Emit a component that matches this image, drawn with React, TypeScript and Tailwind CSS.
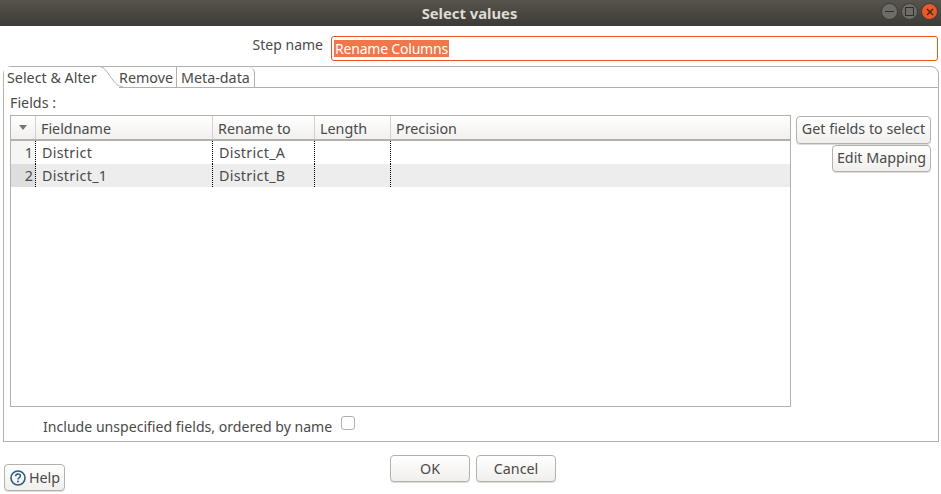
import React from "react";

const font = "font-['Noto_Sans','Open_Sans',sans-serif]";

const Btn = ({ label, className }: { label: string; className: string }) => (
  <button className={`flex items-center justify-center rounded-[4px] border border-[#b4b1ac] bg-gradient-to-b from-white to-[#f0efed] text-[14.3px] text-[#4a4a48] shadow-[0_1px_0_#dedcd8] ${className}`}>
    {label}
  </button>
);

const rows = [
  { n: 1, name: "District", to: "District_A" },
  { n: 2, name: "District_1", to: "District_B" },
];

const TitleButton = ({ bg, children }: { bg: string; children: React.ReactNode }) => (
  <div className={`flex h-[17px] w-[17px] items-center justify-center rounded-full border border-[#3c3a36] ${bg}`}>{children}</div>
);

export default function App() {
  return (
    <div className={`flex h-[494px] w-[941px] flex-col overflow-hidden bg-white text-[14.3px] text-[#4a4a48] ${font}`}>
      {/* title bar */}
      <div className="relative flex h-[26px] items-center justify-center bg-gradient-to-b from-[#57544d] to-[#3d3b36]">
        <span className="-ml-[2px] text-[14.8px] font-bold text-[#dfdbd2]">Select values</span>
        <div className="absolute right-[3px] top-[3px] flex gap-[3px]">
          <TitleButton bg="bg-[#6e6c66]">
            <div className="h-[1px] w-[9px] bg-[#2f2e2a]" />
          </TitleButton>
          <TitleButton bg="bg-[#6e6c66]">
            <div className="h-[9px] w-[9px] border border-[#2f2e2a]" />
          </TitleButton>
          <TitleButton bg="bg-[#e9592a]">
            <svg width="8" height="8" viewBox="0 0 8 8">
              <path d="M1 1L7 7M7 1L1 7" stroke="#4a2412" strokeWidth="1.4" />
            </svg>
          </TitleButton>
        </div>
      </div>

      {/* step name */}
      <div className="mt-[10px] flex h-[25px]">
        <div className="w-[323px] pb-[2px] text-right text-[14px] leading-[18px]">Step name</div>
        <div className="ml-[8px] mr-[3px] flex flex-1 items-center rounded-[3px] border border-[#e95420] pl-[2px]">
          <span className="bg-[#f0774a] px-[1px] text-[14px] leading-[17px] tracking-[-0.2px] text-white">Rename Columns</span>
        </div>
      </div>

      {/* tabs */}
      <div className="relative ml-[3px] mr-[2px] mt-[5px] flex h-[22px] rounded-t-[8px] border border-[#b4b1ac]">
        <div className="relative z-10 -mb-[1px] w-[115px] bg-white pl-[3px] leading-[21px]">Select &amp; Alter</div>
        <svg className="absolute left-[92px] top-[-1px] z-20" width="30" height="22" viewBox="0 0 30 22" fill="none">
          <path d="M0 .5H3C9 .5 12 8 17 13C20 18 23 21 28 21" fill="white" />
          <path d="M0 .5H3C9 .5 12 8 17 14C20 18 22 20.5 27 20.5" stroke="#b4b1ac" />
        </svg>
        <div className="w-[57px] leading-[21px]">Remove</div>
        <div className="w-[79px] rounded-tr-[6px] border-x border-[#b4b1ac] pl-[4px] leading-[21px]">Meta-data</div>
      </div>

      {/* panel */}
      <div className="ml-[3px] mr-[2px] flex h-[354px] flex-col border border-t-0 border-[#b4b1ac] px-[6px]">
        <div className="mt-[6px] h-[18px] leading-[18px]">Fields :</div>
        <div className="mt-[3px] flex">
          {/* table */}
          <div className="flex h-[292px] w-[781px] flex-col border border-[#b4b1ac]">
            <div className="flex h-[25px] border-b-2 border-[#b4b1ac] bg-gradient-to-b from-white to-[#f1f0ee]">
              <div className="flex w-[25px] items-center justify-center border-r border-[#d4d2ce]">
                <svg width="8" height="5" viewBox="0 0 8 5" className="mr-[1px]">
                  <path d="M0 0H8L4 5Z" fill="#77756f" />
                </svg>
              </div>
              <div className="w-[177px] border-r border-[#d4d2ce] pl-[5px] leading-[25px]">Fieldname</div>
              <div className="w-[102px] border-r border-[#d4d2ce] pl-[5px] leading-[25px]">Rename to</div>
              <div className="w-[76px] border-r border-[#d4d2ce] pl-[5px] leading-[25px]">Length</div>
              <div className="flex-1 pl-[5px] leading-[25px]">Precision</div>
            </div>
            {rows.map((r) => (
              <div key={r.n} className={`flex h-[23px] leading-[23px] ${r.n === 2 ? "bg-[#ededed]" : "bg-white"}`}>
                <div className={`w-[25px] border-r border-dotted border-black pr-[2px] text-right ${r.n === 2 ? "bg-[#dedede]" : "bg-[#f5f5f4]"}`}>{r.n}</div>
                <div className="w-[177px] border-r border-dotted border-black pl-[6px] tracking-[0.3px]">{r.name}</div>
                <div className="w-[102px] border-r border-dotted border-black pl-[6px] tracking-[0.3px]">{r.to}</div>
                <div className="w-[76px] border-r border-dotted border-black" />
                <div className="flex-1" />
              </div>
            ))}
          </div>
          {/* side buttons */}
          <div className="ml-[5px] flex w-[135px] flex-col items-end gap-[1px] pt-[1px]">
            <Btn label="Get fields to select" className="h-[28px] w-[135px] pb-[2px]" />
            <Btn label="Edit Mapping" className="h-[27px] w-[99px] pb-[2px]" />
          </div>
        </div>
        <div className="mt-[9px] flex items-start pl-[33px]">
          <span className="pt-[1px] text-[14.1px] leading-[20px]">Include unspecified fields, ordered by name</span>
          <div className="ml-[9px] h-[14px] w-[14px] rounded-[3px] border border-[#b4b1ac] bg-white" />
        </div>
      </div>

      {/* footer */}
      <div className="flex flex-1">
        <button className="ml-[4px] mt-[22px] flex h-[27px] w-[61px] items-center justify-center gap-[2px] rounded-[4px] border border-[#b4b1ac] bg-gradient-to-b from-white to-[#f0efed] shadow-[0_1px_0_#dedcd8]">
          <svg width="18" height="18" viewBox="0 0 18 18" fill="none">
            <circle cx="9" cy="9" r="7" stroke="#2b5c7e" strokeWidth="1.6" />
            <path d="M6.6 7.2C6.7 5.8 7.7 5 9 5C10.4 5 11.4 5.9 11.4 7C11.4 8.5 9 8.6 9 10.4" stroke="#2b5c7e" strokeWidth="1.5" />
            <circle cx="9" cy="12.6" r="1" fill="#2b5c7e" />
          </svg>
          Help
        </button>
        <Btn label="OK" className="ml-[325px] mt-[13px] h-[27px] w-[80px]" />
        <Btn label="Cancel" className="ml-[6px] mt-[13px] h-[27px] w-[80px]" />
      </div>
    </div>
  );
}
